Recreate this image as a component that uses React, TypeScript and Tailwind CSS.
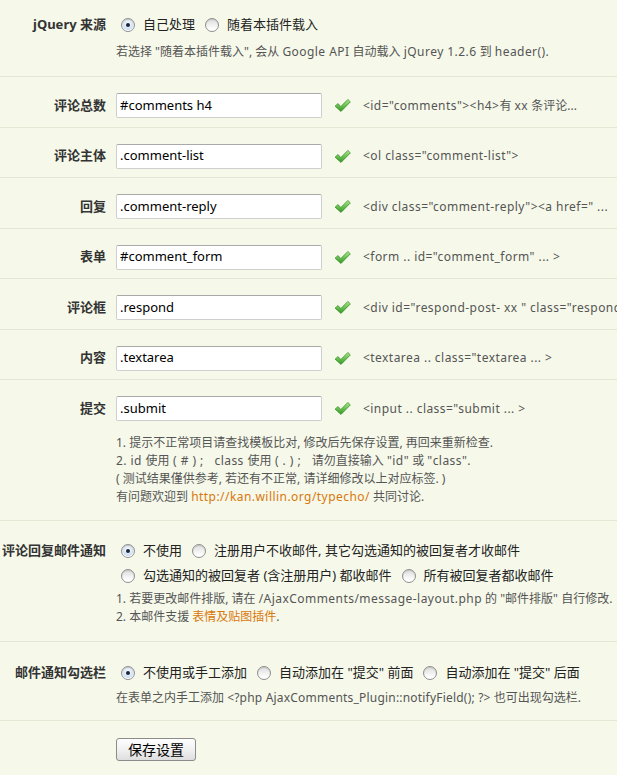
import React from "react";

const FONT = "font-['Noto_Sans','Noto_Sans_CJK_SC',sans-serif]";

function L({ children }: { children: React.ReactNode }) {
  return <span className="tracking-[0.45px]">{children}</span>;
}

function Radio({ checked }: { checked?: boolean }) {
  return (
    <span className="relative inline-block w-[14px] h-[14px] shrink-0 rounded-full border border-[#8f8f8f] bg-[linear-gradient(180deg,#dcdcdc_0%,#ffffff_85%)] shadow-[inset_0_1px_1px_rgba(0,0,0,0.12)]">
      {checked && (
        <span className="absolute inset-[1px] rounded-full bg-[radial-gradient(circle_at_50%_40%,#ffffff_0%,#d6e6fb_55%,#9fbde6_100%)]">
          <span className="absolute left-1/2 top-1/2 w-[4px] h-[4px] -ml-[2px] -mt-[2px] rounded-full bg-[#1d2733]" />
        </span>
      )}
    </span>
  );
}

function Option({ checked, children }: { checked?: boolean; children: React.ReactNode }) {
  return (
    <span className="inline-flex items-center mr-[5px]">
      <span className="ml-[5px] mr-[8px] inline-flex">
        <Radio checked={checked} />
      </span>
      <span className="text-[13px] text-[#222] whitespace-nowrap">{children}</span>
    </span>
  );
}

function Check() {
  return (
    <svg width="17" height="15" viewBox="0 0 16 14" className="shrink-0">
      <defs>
        <linearGradient id="cg" x1="0" y1="0" x2="0" y2="1">
          <stop offset="0" stopColor="#a6ea86" />
          <stop offset="1" stopColor="#2f9a22" />
        </linearGradient>
      </defs>
      <path
        d="M1 7.6 L3.8 5.2 L6.4 8 L13 1.3 L15.4 3.6 L6.6 12.6 Z"
        fill="url(#cg)"
        stroke="#3b8a2a"
        strokeWidth="0.7"
        strokeLinejoin="round"
      />
    </svg>
  );
}

function Label({ children }: { children: React.ReactNode }) {
  return (
    <div className="w-[106px] shrink-0 text-right font-bold text-[13px] text-[#333] whitespace-nowrap">
      {children}
    </div>
  );
}

function InputBox({ value }: { value: string }) {
  return (
    <div className="w-[206px] h-[25px] shrink-0 bg-white border border-[#cfcfcf] border-t-[#a9a9a9] rounded-[2px] flex items-center pl-[3px] text-[13px] text-black">
      {value}
    </div>
  );
}

function InputRow({ label, value, desc }: { label: string; value: string; desc: React.ReactNode }) {
  return (
    <div className="flex items-center pt-[16px] pb-[8.5px] border-b border-[#e3e8d4]">
      <Label>{label}</Label>
      <div className="ml-[10px] flex items-center">
        <InputBox value={value} />
        <span className="ml-[12px] inline-flex">
          <Check />
        </span>
        <span className="ml-[12px] text-[12px] text-[#555] whitespace-pre">{desc}</span>
      </div>
    </div>
  );
}

export default function App() {
  return (
    <div className={`${FONT} w-[617px] min-h-[775px] bg-[#f6f9ea] overflow-hidden`}>
      {/* jQuery row */}
      <div className="flex pt-[15px] pb-[15px] border-b border-[#e3e8d4]">
        <div className="h-[20px] flex items-center">
          <Label>jQuery 来源</Label>
        </div>
        <div className="ml-[10px]">
          <div className="h-[20px] flex items-center">
            <Option checked>自己处理</Option>
            <Option>随着本插件载入</Option>
          </div>
          <div className="mt-[8px] text-[12px] leading-[18px] text-[#555] whitespace-pre">
            若选择 "随着本插件载入", 会从 <L>Google API</L> 自动载入 <L>jQurey 1.2.6</L> 到 <L>header().</L>
          </div>
        </div>
      </div>

      <InputRow label="评论总数" value="#comments h4" desc={<><L>{'<id="comments"><h4>'}</L>有 <L>xx</L> 条评论...</>} />
      <InputRow label="评论主体" value=".comment-list" desc={<L>{'<ol class="comment-list">'}</L>} />
      <InputRow label="回复" value=".comment-reply" desc={<L>{'<div class="comment-reply"><a href=" ...'}</L>} />
      <InputRow label="表单" value="#comment_form" desc={<L>{'<form .. id="comment_form" ... >'}</L>} />
      <InputRow label="评论框" value=".respond" desc={<L>{'<div id="respond-post- xx " class="respond" ...>'}</L>} />
      <InputRow label="内容" value=".textarea" desc={<L>{'<textarea .. class="textarea ... >'}</L>} />

      {/* submit row */}
      <div className="flex pt-[16px] pb-[14px] border-b border-[#e3e8d4]">
        <div className="h-[25px] flex items-center">
          <Label>提交</Label>
        </div>
        <div className="ml-[10px]">
          <div className="flex items-center">
            <InputBox value=".submit" />
            <span className="ml-[12px] inline-flex">
              <Check />
            </span>
            <span className="ml-[12px] text-[12px] text-[#555] whitespace-pre">
              <L>{'<input .. class="submit ... >'}</L>
            </span>
          </div>
          <div className="mt-[13px] text-[12px] leading-[18px] text-[#555] whitespace-pre">
            <div>1. 提示不正常项目请查找模板比对, 修改后先保存设置, 再回来重新检查.</div>
            <div>
              <L>{'2. id '}</L>使用<L>{' ( # ) ;   class '}</L>使用<L>{' ( . ) ;   '}</L>请勿直接输入 <L>"id"</L> 或 <L>"class".</L>
            </div>
            <div>( 测试结果僅供参考, 若还有不正常, 请详细修改以上对应标签. )</div>
            <div>
              有问题欢迎到 <span className="text-[#d9770d]"><L>http://kan.willin.org/typecho/</L></span> 共同讨论.
            </div>
          </div>
        </div>
      </div>

      {/* mail notify row */}
      <div className="flex pt-[20px] pb-[15px] border-b border-[#e3e8d4]">
        <div className="h-[20px] flex items-center">
          <Label>评论回复邮件通知</Label>
        </div>
        <div className="ml-[10px]">
          <div className="h-[20px] flex items-center">
            <Option checked>不使用</Option>
            <Option>注册用户不收邮件, 其它勾选通知的被回复者才收邮件</Option>
          </div>
          <div className="mt-[5px] h-[20px] flex items-center">
            <Option>勾选通知的被回复者 (含注册用户) 都收邮件</Option>
            <Option>所有被回复者都收邮件</Option>
          </div>
          <div className="mt-[4px] text-[12px] leading-[18px] text-[#555] whitespace-pre">
            <div>
              1. 若要更改邮件排版, 请在 <L>/AjaxComments/message-layout.php</L> 的 "邮件排版" 自行修改.
            </div>
            <div>
              2. 本邮件支援 <span className="text-[#d9770d]">表情及贴图插件</span>.
            </div>
          </div>
        </div>
      </div>

      {/* checkbox position row */}
      <div className="flex pt-[21px] pb-[13px] border-b border-[#e3e8d4]">
        <div className="h-[20px] flex items-center">
          <Label>邮件通知勾选栏</Label>
        </div>
        <div className="ml-[10px]">
          <div className="h-[20px] flex items-center">
            <Option checked>不使用或手工添加</Option>
            <Option>自动添加在 "提交" 前面</Option>
            <Option>自动添加在 "提交" 后面</Option>
          </div>
          <div className="mt-[6px] text-[12px] leading-[18px] text-[#555] whitespace-pre">
            在表单之内手工添加 <span className="tracking-[0.2px]">{'<?php AjaxComments_Plugin::notifyField(); ?>'}</span> 也可出现勾选栏.
          </div>
        </div>
      </div>

      {/* save */}
      <div className="flex pt-[17px] pb-[14px]">
        <div className="w-[106px] shrink-0" />
        <div className="ml-[10px]">
          <button className="w-[80px] h-[23px] rounded-[3px] border border-[#8c8c8c] bg-[linear-gradient(180deg,#fefefe_0%,#f1f1f1_50%,#dedede_100%)] text-[14px] text-black leading-none flex items-center justify-center">
            保存设置
          </button>
        </div>
      </div>
    </div>
  );
}
